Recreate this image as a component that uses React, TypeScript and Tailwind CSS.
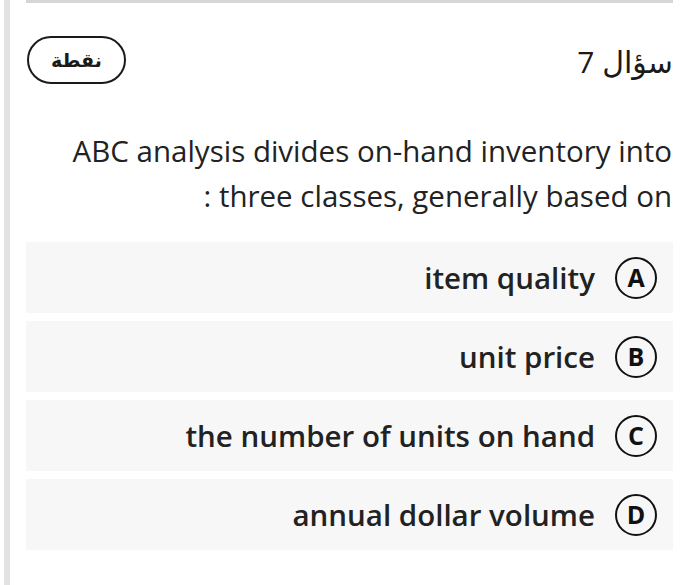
import React from "react";

const options = [
  { letter: "A", text: "item quality" },
  { letter: "B", text: "unit price" },
  { letter: "C", text: "the number of units on hand" },
  { letter: "D", text: "annual dollar volume" },
];

export default function App() {
  return (
    <div
      className="flex w-[700px] h-[585px] bg-white overflow-hidden"
      style={{ fontFamily: '"Open Sans", "DejaVu Sans", sans-serif' }}
    >
      <div className="ml-[4px] w-[6px] h-full bg-[#e2e2e2] shrink-0" />
      <div dir="rtl" className="flex flex-col ml-[16px] w-[647px]">
        <div className="h-[3px] bg-[#d6d6d6]" />
        <div className="flex items-center justify-between mt-[33px] h-[48px]">
          <div className="text-[30px] font-normal text-[#1a1a1a] leading-none pt-[3px]">سؤال 7</div>
          <div className="w-[99px] h-[48px] rounded-full border-[2px] border-[#1a1a1a] flex items-center justify-center text-[19px] font-bold text-[#1a1a1a] ml-[1px]">
            نقطة
          </div>
        </div>
        <div className="mt-[44px] text-[29.5px] leading-[45px] text-[#222] pr-[1px]">
          ABC analysis divides on-hand inventory into three classes, generally based on :
        </div>
        <div className="flex flex-col gap-[8px] mt-[24px]">
          {options.map((o) => (
            <div
              key={o.letter}
              className="h-[71px] bg-[#f7f7f7] flex items-center pr-[16px] gap-[20px]"
            >
              <div className="w-[42px] h-[42px] rounded-full border-[2.5px] border-[#111] flex items-center justify-center text-[25px] font-bold text-[#111] leading-none shrink-0">
                {o.letter}
              </div>
              <div dir="ltr" className="text-[29.5px] font-semibold text-[#222] leading-none">
                {o.text}
              </div>
            </div>
          ))}
        </div>
      </div>
    </div>
  );
}
